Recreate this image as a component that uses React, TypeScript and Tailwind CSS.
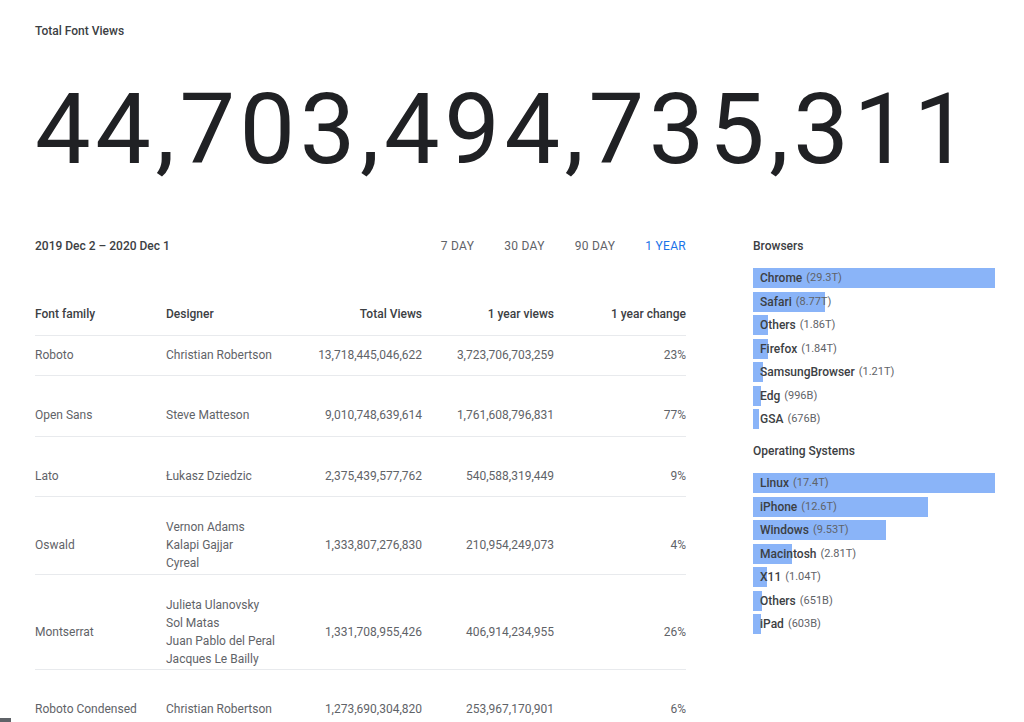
import React from "react";

type Row = {
  family: string;
  designers: string[];
  total: string;
  year: string;
  change: string;
  pad: string;
};

const rows: Row[] = [
  { family: "Roboto", designers: ["Christian Robertson"], total: "13,718,445,046,622", year: "3,723,706,703,259", change: "23%", pad: "pt-[10px] pb-[11px]" },
  { family: "Open Sans", designers: ["Steve Matteson"], total: "9,010,748,639,614", year: "1,761,608,796,831", change: "77%", pad: "pt-[30px] pb-[12px]" },
  { family: "Lato", designers: ["Łukasz Dziedzic"], total: "2,375,439,577,762", year: "540,588,319,449", change: "9%", pad: "pt-[30px] pb-[11px]" },
  { family: "Oswald", designers: ["Vernon Adams", "Kalapi Gajjar", "Cyreal"], total: "1,333,807,276,830", year: "210,954,249,073", change: "4%", pad: "pt-[21px] pb-[2px]" },
  { family: "Montserrat", designers: ["Julieta Ulanovsky", "Sol Matas", "Juan Pablo del Peral", "Jacques Le Bailly"], total: "1,331,708,955,426", year: "406,914,234,955", change: "26%", pad: "pt-[21px] pb-[1px]" },
  { family: "Roboto Condensed", designers: ["Christian Robertson"], total: "1,273,690,304,820", year: "253,967,170,901", change: "6%", pad: "pt-[30px] pb-[11px]" },
];

const browsers: [string, string, number][] = [
  ["Chrome", "29.3T", 29.3],
  ["Safari", "8.77T", 8.77],
  ["Others", "1.86T", 1.86],
  ["Firefox", "1.84T", 1.84],
  ["SamsungBrowser", "1.21T", 1.21],
  ["Edg", "996B", 0.996],
  ["GSA", "676B", 0.676],
];

const systems: [string, string, number][] = [
  ["Linux", "17.4T", 17.4],
  ["iPhone", "12.6T", 12.6],
  ["Windows", "9.53T", 9.53],
  ["Macintosh", "2.81T", 2.81],
  ["X11", "1.04T", 1.04],
  ["Others", "651B", 0.651],
  ["iPad", "603B", 0.603],
];

function Bars({ items }: { items: [string, string, number][] }) {
  const max = items[0][2];
  return (
    <div className="flex flex-col">
      {items.map(([name, val, n]) => (
        <div key={name} className="relative h-[20px] mb-[3.5px] w-[242px]">
          <div
            className="absolute left-0 top-0 h-full bg-[#8ab4f8]"
            style={{ width: `${(n / max) * 242}px` }}
          />
          <div className="relative flex items-center h-full pl-[7px] leading-[20px] whitespace-nowrap">
            <span className="text-[12px] font-medium text-[#3c4043]">{name}</span>
            <span className="ml-[4px] text-[11px] text-[#5f6368]">({val})</span>
          </div>
        </div>
      ))}
    </div>
  );
}

export default function App() {
  return (
    <div className="relative h-[722px] w-[1024px] overflow-hidden bg-white font-['Roboto',sans-serif] pl-[35px]">
      <div className="pt-[23px] text-[12px] leading-[16px] font-medium text-[#3c4043]">
        Total Font Views
      </div>
      <div className="mt-[29px] h-[123px] text-[99px] leading-[123px] font-normal text-[#202124] whitespace-nowrap tracking-[4.55px]">
        44,703,494,735,311
      </div>

      <div className="mt-[47px] flex gap-[67px]">
        {/* left */}
        <div className="w-[651px]">
          <div className="flex items-center justify-between text-[12px] leading-[16px]">
            <span className="font-medium text-[#3c4043]">2019 Dec 2 – 2020 Dec 1</span>
            <div className="flex gap-[30px] text-[#5f6368] tracking-[0.3px]">
              <span>7 DAY</span>
              <span>30 DAY</span>
              <span>90 DAY</span>
              <span className="text-[#1a73e8]">1 YEAR</span>
            </div>
          </div>

          <div className="mt-[52px] grid grid-cols-[131px_124px_132px_132px_132px] pb-[13px] border-b border-[#e8eaed] text-[12px] leading-[16px] font-medium text-[#3c4043]">
            <span>Font family</span>
            <span>Designer</span>
            <span className="text-right">Total Views</span>
            <span className="text-right">1 year views</span>
            <span className="text-right">1 year change</span>
          </div>

          {rows.map((r) => (
            <div
              key={r.family}
              className={`grid grid-cols-[131px_124px_132px_132px_132px] items-center border-b border-[#e8eaed] text-[12px] leading-[18px] text-[#5f6368] ${r.pad}`}
            >
              <span>{r.family}</span>
              <div className="flex flex-col whitespace-nowrap">
                {r.designers.map((d) => (
                  <span key={d}>{d}</span>
                ))}
              </div>
              <span className="text-right">{r.total}</span>
              <span className="text-right">{r.year}</span>
              <span className="text-right">{r.change}</span>
            </div>
          ))}
        </div>

        {/* right */}
        <div className="w-[242px]">
          <div className="text-[12px] leading-[16px] font-medium text-[#3c4043] mb-[14px]">
            Browsers
          </div>
          <Bars items={browsers} />
          <div className="mt-[10.5px] text-[12px] leading-[16px] font-medium text-[#3c4043] mb-[14px]">
            Operating Systems
          </div>
          <Bars items={systems} />
        </div>
      </div>

      <div className="absolute left-0 bottom-0 w-[11px] h-[4px] bg-[#5f6368]" />
    </div>
  );
}
